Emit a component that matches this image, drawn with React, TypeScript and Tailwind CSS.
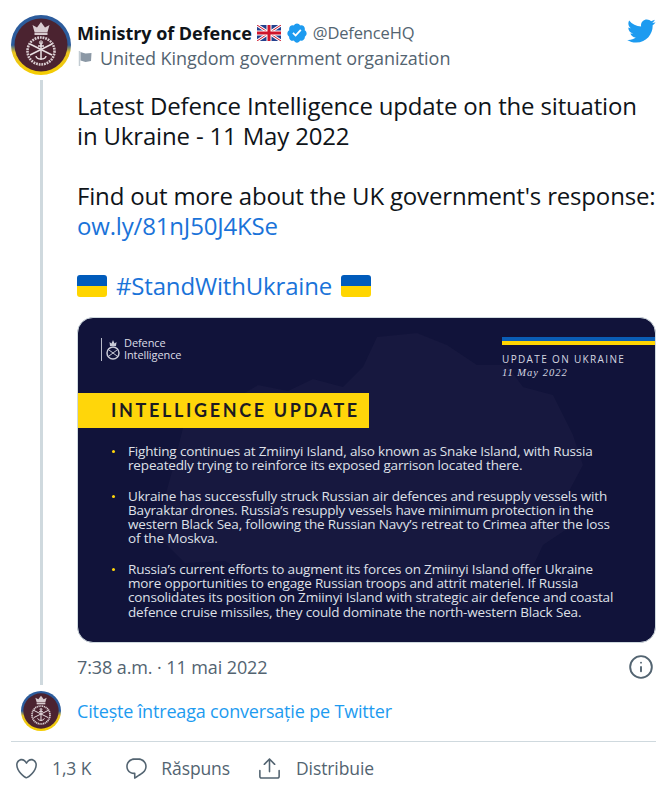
import React from 'react';
import { Info } from 'lucide-react';

const sans = { fontFamily: '"Open Sans", "Noto Sans", sans-serif' };

const bullets = [
  ['Fighting continues at Zmiinyi Island, also known as Snake Island, with Russia', 'repeatedly trying to reinforce its exposed garrison located there.'],
  ['Ukraine has successfully struck Russian air defences and resupply vessels with', 'Bayraktar drones. Russia’s resupply vessels have minimum protection in the', 'western Black Sea, following the Russian Navy’s retreat to Crimea after the loss', 'of the Moskva.'],
  ['Russia’s current efforts to augment its forces on Zmiinyi Island offer Ukraine', 'more opportunities to engage Russian troops and attrit materiel. If Russia', 'consolidates its position on Zmiinyi Island with strategic air defence and coastal', 'defence cruise missiles, they could dominate the north-western Black Sea.'],
];

const Crest: React.FC<{ size: number }> = ({ size }) => (
  <svg width={size} height={size} viewBox="0 0 60 60" className="shrink-0">
    <defs>
      <linearGradient id="ring" x1="0" y1="0" x2="0" y2="1">
        <stop offset="0.5" stopColor="#2c5c9c" />
        <stop offset="0.62" stopColor="#e8c320" />
        <stop offset="1" stopColor="#f5cd00" />
      </linearGradient>
    </defs>
    <circle cx="30" cy="30" r="30" fill="url(#ring)" />
    <circle cx="30" cy="30" r="26.500" fill="#4b2330" />
    <path d="M23.500 17l-2-7 4.500 2.500L30 7l4 5.500 4.500-2.500-2 7z" fill="#d9ccd0" />
    <rect x="23.500" y="17.500" width="13" height="2.500" fill="#d9ccd0" />
    <circle cx="30" cy="36" r="13.500" fill="none" stroke="#d9ccd0" strokeWidth="2.600" strokeDasharray="1.800 0.900" />
    <path d="M19 29l22 11M41 29L19 40" stroke="#e8dfe2" strokeWidth="1.500" />
    <path d="M30 27v18M25 41c.5 4 9.500 4 10 0M27 31h6" stroke="#e8dfe2" strokeWidth="1.500" fill="none" />
    <circle cx="30" cy="27.500" r="1.600" fill="none" stroke="#e8dfe2" strokeWidth="1" />
  </svg>
);

const UnionFlag = () => (
  <svg width="24" height="16" viewBox="0 0 24 16" className="shrink-0">
    <rect width="24" height="16" rx="1.500" fill="#24408e" />
    <path d="M0 0l24 16M24 0L0 16" stroke="#fff" strokeWidth="3" />
    <path d="M0 0l24 16M24 0L0 16" stroke="#cf142b" strokeWidth="1" />
    <path d="M12 0v16M0 8h24" stroke="#fff" strokeWidth="5" />
    <path d="M12 0v16M0 8h24" stroke="#cf142b" strokeWidth="3" />
  </svg>
);

const Verified = () => (
  <svg width="22" height="22" viewBox="0 0 24 24" className="shrink-0">
    <path
      fill="#1d9bf0"
      d="M22.500 12.500c0-1.580-.875-2.950-2.148-3.600.154-.435.238-.905.238-1.400 0-2.210-1.710-3.998-3.818-3.998-.47 0-.92.084-1.336.25C14.818 2.415 13.510 1.500 12 1.500s-2.816.917-3.437 2.250c-.415-.165-.866-.25-1.336-.25-2.110 0-3.818 1.790-3.818 4 0 .494.083.964.237 1.400-1.272.65-2.147 2.018-2.147 3.600 0 1.495.782 2.798 1.942 3.486-.02.17-.032.34-.032.514 0 2.210 1.708 4 3.818 4 .47 0 .92-.086 1.335-.25.62 1.334 1.926 2.250 3.437 2.250 1.512 0 2.818-.916 3.437-2.250.415.163.865.248 1.336.248 2.110 0 3.818-1.790 3.818-4 0-.174-.012-.344-.033-.513 1.158-.687 1.943-1.990 1.943-3.484z"
    />
    <path fill="#fff" d="M10.540 16.200l-3.640-3.630 1.370-1.370 2.170 2.170 5.030-5.460 1.430 1.320z" />
  </svg>
);

const TwitterBird = () => (
  <svg width="30" height="30" viewBox="0 0 24 24" fill="#1d9bf0" className="shrink-0">
    <path d="M23.643 4.937c-.835.37-1.732.62-2.675.733.962-.576 1.700-1.490 2.048-2.578-.9.534-1.897.922-2.958 1.130-.85-.904-2.060-1.470-3.400-1.470-2.572 0-4.658 2.086-4.658 4.660 0 .364.042.718.12 1.060-3.873-.195-7.304-2.050-9.602-4.868-.4.69-.63 1.490-.63 2.342 0 1.616.823 3.043 2.072 3.878-.764-.025-1.482-.234-2.110-.583v.06c0 2.257 1.605 4.140 3.737 4.568-.392.106-.803.162-1.227.162-.3 0-.593-.028-.877-.082.593 1.850 2.313 3.198 4.352 3.234-1.595 1.250-3.604 1.995-5.786 1.995-.376 0-.747-.022-1.112-.065 2.062 1.323 4.510 2.093 7.140 2.093 8.570 0 13.255-7.098 13.255-13.254 0-.2-.005-.402-.014-.602.91-.658 1.700-1.477 2.323-2.410z" />
  </svg>
);

const HeartIcon = () => (
  <svg width="25" height="25" viewBox="0 0 24 24" fill="currentColor" className="shrink-0">
    <path d="M12 21.638h-.014C9.403 21.590 1.950 14.856 1.950 8.478c0-3.064 2.525-5.754 5.403-5.754 2.290 0 3.830 1.580 4.646 2.730.814-1.148 2.354-2.730 4.645-2.730 2.880 0 5.404 2.690 5.404 5.755 0 6.376-7.454 13.110-10.037 13.157H12zM7.354 4.225c-2.080 0-3.903 1.988-3.903 4.255 0 5.740 7.034 11.596 8.550 11.658 1.518-.062 8.550-5.917 8.550-11.658 0-2.267-1.823-4.255-3.903-4.255-2.528 0-3.940 2.936-3.952 2.965-.23.562-1.156.562-1.387 0-.014-.03-1.425-2.965-3.954-2.965z" />
  </svg>
);

const ReplyIcon = () => (
  <svg width="25" height="25" viewBox="0 0 24 24" fill="currentColor" className="shrink-0">
    <path d="M14.046 2.242l-4.148-.01h-.002c-4.374 0-7.800 3.427-7.800 7.802 0 4.098 3.186 7.206 7.465 7.370v3.828c0 .108.044.286.12.403.142.225.384.347.632.347.138 0 .277-.038.402-.118.264-.168 6.473-4.140 8.088-5.506 1.902-1.610 3.040-3.970 3.043-6.312v-.017c-.006-4.367-3.430-7.787-7.800-7.788zm3.787 12.972c-1.134.96-4.862 3.405-6.772 4.643V16.670c0-.414-.335-.75-.75-.75h-.396c-3.660 0-6.318-2.476-6.318-5.886 0-3.534 2.768-6.302 6.300-6.302l4.147.01h.002c3.532 0 6.300 2.766 6.302 6.296-.003 1.910-.942 3.844-2.514 5.176z" />
  </svg>
);

const ShareIcon = () => (
  <svg width="25" height="25" viewBox="0 0 24 24" fill="currentColor" className="shrink-0">
    <path d="M17.530 7.470l-5-5c-.293-.293-.768-.293-1.060 0l-5 5c-.294.293-.294.768 0 1.060s.767.294 1.060 0l3.720-3.720V15c0 .414.336.75.75.75s.75-.336.75-.75V4.810l3.720 3.720c.146.147.338.22.53.22s.384-.072.53-.22c.293-.293.293-.767 0-1.060z" />
    <path d="M19.708 21.944H4.292C3.028 21.944 2 20.916 2 19.652V14c0-.414.336-.75.75-.75s.75.336.75.75v5.652c0 .437.355.792.792.792h15.416c.437 0 .792-.355.792-.792V14c0-.414.336-.75.75-.75s.75.336.75.75v5.652c0 1.264-1.028 2.292-2.292 2.292z" />
  </svg>
);

const UkraineFlag = () => (
  <span className="flex h-[22px] w-[30px] shrink-0 flex-col overflow-hidden rounded-[3px]">
    <span className="h-1/2 bg-[#005bbb]" />
    <span className="h-1/2 bg-[#ffd500]" />
  </span>
);

const Infographic = () => (
  <div className="relative h-[326px] overflow-hidden rounded-[16px] border border-[#cfd9de] bg-[#11133a]">
    {/* faint map of the region behind the text */}
    <svg className="absolute inset-0" width="578" height="324" viewBox="0 0 578 324">
      <path
        d="M95 150l15-60 40-5 30-18 30 6 25-12 30 8 20-20 14-30 40-4 30 12 30 20 30 0 16 22 30 8 20 40 10 30-16 30 6 30-30 20-14 30-40 6-20 28-50 0-20-16-60 4-24-24-50 12-40-24-40 2-30-30z"
        fill="#17183f"
      />
    </svg>
    <div className="relative flex h-full flex-col">
      <div className="flex items-start justify-between pt-[19px]">
        <div className="flex items-center gap-[4px] pl-[23px]">
          <span className="h-[23px] w-px bg-[#b8bac8]" />
          <svg width="14" height="23" viewBox="0 0 14 23">
            <path d="M4 8l-.5-4 2 1.500L7 2l1.500 3.500 2-1.500L10 8z" fill="#c9cad6" />
            <circle cx="7" cy="15" r="6" fill="none" stroke="#c9cad6" strokeWidth="1.500" />
            <path d="M3 12l8 6M11 12l-8 6" stroke="#c9cad6" strokeWidth="1" />
          </svg>
          <div className="text-[11px] leading-[12px] tracking-[-0.1px] text-[#dcdde6]" style={sans}>
            Defence
            <br />
            Intelligence
          </div>
        </div>
        <div className="w-[153px]">
          <div className="h-[4px] bg-[#0a5db5]" />
          <div className="h-[4px] bg-[#ffd500]" />
          <div className="mt-[7px] text-[10px] leading-[14px] tracking-[1.35px] text-[#d5d6e0]" style={sans}>
            UPDATE ON UKRAINE
          </div>
          <div
            className="text-[10.5px] italic leading-[13px] tracking-[1px] text-[#d5d6e0]"
            style={{ fontFamily: '"Liberation Serif", serif' }}
          >
            11 May 2022
          </div>
        </div>
      </div>
      <div className="mt-[14px] flex h-[35px] w-[291px] shrink-0 items-center bg-[#ffd60a] pl-[33px]">
        <span
          className="whitespace-nowrap text-[18px] font-bold tracking-[2.65px] text-[#1c1a22]"
          style={{ fontFamily: 'Lato, sans-serif' }}
        >
          INTELLIGENCE UPDATE
        </span>
      </div>
      <div className="mt-[16px] flex flex-col gap-[16px] pl-[36px] text-[13.5px] leading-[14.3px] tracking-[-0.16px] text-[#dfe0e8]" style={sans}>
        {bullets.map((lines, i) => (
          <div key={i} className="relative">
            <span className="absolute left-[-2px] top-[6px] h-[3px] w-[3px] rounded-full bg-[#ffd60a]" />
            <div className="pl-[14px]">
              {lines.map(line => (
                <div key={line} className="whitespace-nowrap">{line}</div>
              ))}
            </div>
          </div>
        ))}
      </div>
    </div>
  </div>
);

const App: React.FC = () => {
  return (
    <div className="h-[785px] w-[670px] overflow-hidden bg-white pl-[11px] pr-[14px] pt-[15px]" style={sans}>
      <div className="flex">
        <Crest size={60} />
        <div className="ml-[6px] flex h-[60px] flex-1 items-start justify-between">
          <div>
            <div className="flex items-center gap-[5px] pt-[6px] text-[16.5px] leading-[24px]">
              <span className="text-[18px] font-bold tracking-[-0.05px] text-[#0f1419]">Ministry of Defence</span>
              <UnionFlag />
              <Verified />
              <span className="tracking-[-0.15px] text-[#536471]">@DefenceHQ</span>
            </div>
            <div className="flex items-center gap-[6px] text-[18px] leading-[26px] tracking-[-0.05px] text-[#536471]">
              <svg width="17" height="17" viewBox="0 0 17 17" className="shrink-0">
                <path d="M2.500 1v15" stroke="#c3ccd3" strokeWidth="1.500" />
                <path d="M3.500 2l5 1.500 6-.5-.5 8-5.500 1-5-1.500z" fill="#8b98a5" />
              </svg>
              United Kingdom government organization
            </div>
          </div>
          <div className="pt-[1px]">
            <TwitterBird />
          </div>
        </div>
      </div>

      <div className="flex">
        <div className="flex w-[66px] shrink-0 justify-center pr-[6px] pt-[5px]">
          <div className="h-[605px] w-[3px] bg-[#cfd9de]" />
        </div>
        <div className="flex-1">
          <div className="pt-[16px] text-[24px] leading-[30px] tracking-[-0.17px] text-[#0f1419]">
            <p className="whitespace-nowrap">Latest Defence Intelligence update on the situation</p>
            <p>in Ukraine - 11 May 2022</p>
            <p className="mt-[30px] whitespace-nowrap">Find out more about the UK government's response:</p>
            <p className="text-[#1a73d9]">ow.ly/81nJ50J4KSe</p>
            <p className="mt-[30px] flex items-center gap-[9px] text-[#1a73d9]">
              <UkraineFlag />
              #StandWithUkraine
              <UkraineFlag />
            </p>
          </div>
          <div className="mt-[16px]">
            <Infographic />
          </div>
          <div className="flex items-center justify-between pt-[11px] text-[18px] leading-[26px] tracking-[-0.1px] text-[#536471]">
            <span>7:38 a.m. · 11 mai 2022</span>
            <Info size={26} strokeWidth={1.75} className="mr-[2px] text-[#536471]" />
          </div>
        </div>
      </div>

      <div className="mt-[6px] flex items-center pl-[10px]">
        <Crest size={40} />
        <span className="ml-[16px] text-[18px] leading-[27px] tracking-[-0.18px] text-[#1d9bf0]">Citește întreaga conversație pe Twitter</span>
      </div>

      <div className="mt-[10px] flex h-[54px] items-center border-t border-[#cfd9de] pl-[3px] text-[17.5px] tracking-[-0.1px] text-[#536471]">
        <HeartIcon />
        <span className="ml-[13px]">1,3 K</span>
        <span className="ml-[33px]"><ReplyIcon /></span>
        <span className="ml-[12px]">Răspuns</span>
        <span className="ml-[27px]"><ShareIcon /></span>
        <span className="ml-[14px]">Distribuie</span>
      </div>
    </div>
  );
};

export default App;
